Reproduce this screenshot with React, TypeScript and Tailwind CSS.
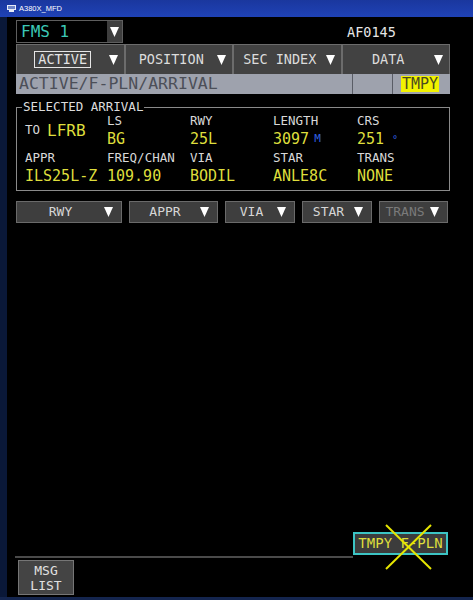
import React from "react";

const mono = "font-['DejaVu_Sans_Mono',monospace]";

function Tri() {
  return (
    <svg width="9" height="10" viewBox="0 0 9 10" className="shrink-0">
      <polygon points="0,0 9,0 4.5,10" fill="#ffffff" />
    </svg>
  );
}

function Tab({ label, boxed }: { label: string; boxed?: boolean }) {
  return (
    <div className="flex items-center h-full bg-[#424242] border border-[#6c6c6c] border-b-0">
      <div className="flex-1 flex justify-center">
        {boxed ? (
          <span className="border border-[#e6e6e6] px-[3px] leading-[15px] text-[#e4e4e4] text-[13.5px]">{label}</span>
        ) : (
          <span className="text-[#dcdcdc] text-[13.5px]">{label}</span>
        )}
      </div>
      <div className="pr-[6px]">
        <Tri />
      </div>
    </div>
  );
}

function DropBtn({ label, w, disabled }: { label: string; w: string; disabled?: boolean }) {
  return (
    <div className={`${w} h-[22px] flex items-center bg-[#3e3e3e] border border-[#6a6a6a]`}>
      <div className={`flex-1 text-center text-[13px] ${disabled ? "text-[#7a7a7a]" : "text-[#d6d6d6]"}`}>{label}</div>
      <div className="pr-[8px]">
        <Tri />
      </div>
    </div>
  );
}

function Label({ children }: { children: React.ReactNode }) {
  return <div className="h-[18px] flex items-center text-[12.5px] text-[#d8d8d8]">{children}</div>;
}

function Value({ children }: { children: React.ReactNode }) {
  return <div className="h-[18px] flex items-center text-[15px] text-[#dede3c]">{children}</div>;
}

function Field({ label, children }: { label: string; children: React.ReactNode }) {
  return (
    <div>
      <Label>{label}</Label>
      <Value>{children}</Value>
    </div>
  );
}

export default function App() {
  return (
    <div className={`w-[473px] h-[600px] flex flex-col bg-black overflow-hidden ${mono}`}>
      {/* window title bar */}
      <div className="h-[17px] shrink-0 flex items-center bg-gradient-to-b from-[#1a379e] to-[#1f42b6] pl-[7px] gap-[3px]">
        <svg width="9" height="7" viewBox="0 0 9 7">
          <rect x="0" y="0" width="9" height="5" fill="#e8ecf8" />
          <rect x="1" y="1" width="7" height="3" fill="#6f86c8" />
          <rect x="2" y="5" width="5" height="2" fill="#e8ecf8" />
        </svg>
        <span className="font-['Liberation_Sans',sans-serif] text-[7.5px] text-white leading-none">A380X_MFD</span>
      </div>

      <div className="flex-1 flex min-h-0">
        <div className="w-[7px] shrink-0 bg-[#0a1838]" />
        <div className="flex-1 flex flex-col pl-[9px] pt-[3px]">
          {/* FMS selector + flight number */}
          <div className="h-[24px] flex items-start">
            <div className="w-[107px] h-[23px] flex border border-[#5e5e5e]">
              <div className="flex-1 bg-black flex items-center pl-[4px] text-[16px] text-[#3cc8b6]">FMS 1</div>
              <div className="w-[15px] bg-[#3e3e3e] flex items-center justify-center">
                <Tri />
              </div>
            </div>
            <div className="ml-[224px] mt-[2px] text-[13.5px] text-[#e6e6e6]">AF0145</div>
          </div>

          {/* page tabs */}
          <div className="w-[434px] h-[30px] grid grid-cols-4">
            <Tab label="ACTIVE" boxed />
            <Tab label="POSITION" />
            <Tab label="SEC INDEX" />
            <Tab label="DATA" />
          </div>

          {/* breadcrumb */}
          <div className="w-[434px] h-[20px] flex bg-[#9ea2ad]">
            <div className="w-[336px] flex items-center pl-[3px] text-[16.5px] text-[#4c4f58]">ACTIVE/F-PLN/ARRIVAL</div>
            <div className="w-[41px] border-l border-r border-[#5a5d66]" />
            <div className="flex-1 flex items-center pl-[8px]">
              <span className="bg-[#f2f200] text-[#4a4a20] text-[15px] leading-[16px] px-[1px]">TMPY</span>
            </div>
          </div>

          {/* selected arrival frame */}
          <div className="relative mt-[13px] w-[434px] h-[84px] border border-[#8a8a8a]">
            <div className="absolute -top-[9px] left-[5px] bg-black px-[1px] text-[12.5px] text-[#dcdcdc] leading-[16px]">
              SELECTED ARRIVAL
            </div>
            <div className="grid grid-cols-[82px_83px_83px_84px_auto] gap-y-[1px] pl-[8px] pt-[4px]">
              <div className="flex items-center gap-[7px] pt-[1px]">
                <span className="text-[12.5px] text-[#d8d8d8]">TO</span>
                <span className="text-[16px] text-[#dede3c]">LFRB</span>
              </div>
              <Field label="LS">BG</Field>
              <Field label="RWY">25L</Field>
              <Field label="LENGTH">
                3097<span className="ml-[5px] text-[11px] text-[#3060e0]">M</span>
              </Field>
              <Field label="CRS">
                251<span className="ml-[8px] text-[10px] text-[#3060e0]">°</span>
              </Field>
              <Field label="APPR">ILS25L-Z</Field>
              <Field label="FREQ/CHAN">109.90</Field>
              <Field label="VIA">BODIL</Field>
              <Field label="STAR">ANLE8C</Field>
              <Field label="TRANS">NONE</Field>
            </div>
          </div>

          {/* procedure selectors */}
          <div className="mt-[10px] flex gap-[7px]">
            <DropBtn label="RWY" w="w-[106px]" />
            <DropBtn label="APPR" w="w-[89px]" />
            <DropBtn label="VIA" w="w-[70px]" />
            <DropBtn label="STAR" w="w-[70px]" />
            <DropBtn label="TRANS" w="w-[69px]" disabled />
          </div>

          <div className="flex-1" />

          {/* footer */}
          <div className="h-[26px] flex items-end -ml-[1px]">
            <div className="w-[338px] h-[2px] bg-[#4a4a4a]" />
            <div className="relative w-[95px] h-[23px] mb-[3px] bg-[#3c3c3c] border-2 border-[#3cc4c4] flex items-center justify-center text-[14px] text-[#dede3c]">
              TMPY F-PLN
              <svg className="absolute left-[30px] -top-[10px]" width="47" height="46" viewBox="0 0 47 46">
                <line x1="1" y1="1" x2="46" y2="45" stroke="#e6e600" strokeWidth="2" />
                <line x1="46" y1="1" x2="1" y2="45" stroke="#e6e600" strokeWidth="2" />
              </svg>
            </div>
          </div>
          <div className="mt-[2px] ml-[2px] mb-[2px] w-[56px] h-[35px] bg-[#444444] border border-[#767676] flex flex-col items-center justify-center text-[13px] leading-[15px] text-[#e0e0e0]">
            <span>MSG</span>
            <span>LIST</span>
          </div>
        </div>
      </div>

      <div className="h-[3px] shrink-0 bg-[#14254e]" />
    </div>
  );
}
